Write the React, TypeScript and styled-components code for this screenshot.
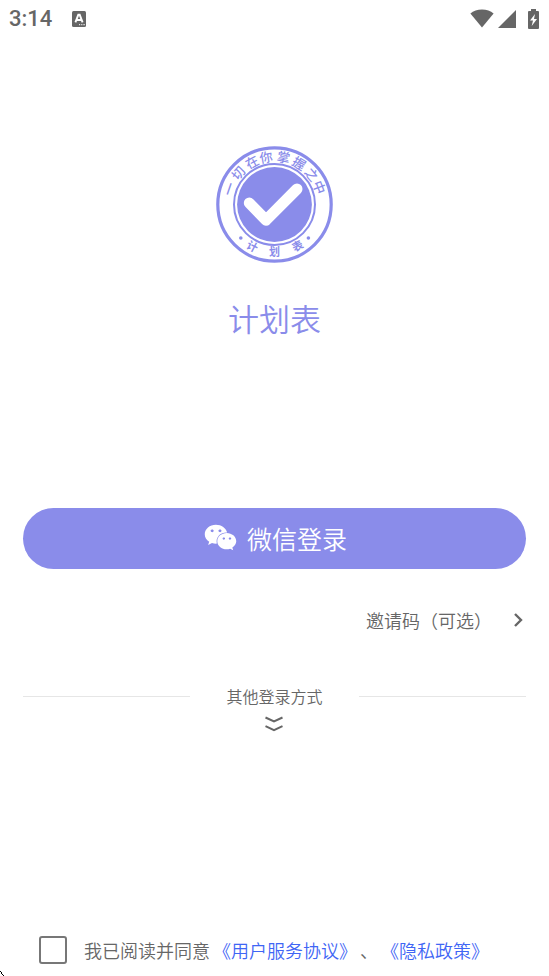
import React from "react";
import styled, { createGlobalStyle } from "styled-components";
import { FaWeixin } from "react-icons/fa";

const brand = "#8a8cea";
const ink = "#666666";
const textFont = `"Noto Sans CJK SC", sans-serif`;

const GlobalStyle = createGlobalStyle`
  *, *::before, *::after { box-sizing: border-box; }
  body {
    margin: 0;
    background: #ffffff;
    color: ${ink};
    font-family: ${textFont};
    font-weight: 350;
  }
  button, input { font: inherit; color: inherit; margin: 0; padding: 0; }
`;

const Page = styled.div`
  position: relative;
  display: flex;
  flex-direction: column;
  min-height: 100vh;
  padding-bottom: 12px;
`;

const StatusBar = styled.header`
  display: flex;
  align-items: center;
  justify-content: space-between;
  height: 37px;
  padding: 0 10px 0 9px;
`;

const StatusGroup = styled.div<{ $gap: number }>`
  display: flex;
  align-items: center;
  gap: ${({ $gap }) => $gap}px;
  svg { display: block; }
`;

const Clock = styled.span`
  font-family: Roboto, sans-serif;
  font-size: 22px;
  font-weight: 500;
  line-height: 28px;
`;

const Brand = styled.section`
  display: flex;
  flex-direction: column;
  align-items: center;
  gap: 35px;
  padding-top: 109px;
`;

const Title = styled.h1`
  margin: 0;
  color: ${brand};
  font-size: 31px;
  font-weight: 350;
  line-height: 40px;
`;

const Actions = styled.main`
  display: flex;
  flex-direction: column;
  padding: 170px 23px 0;
`;

const LoginButton = styled.button`
  display: flex;
  align-items: center;
  justify-content: center;
  gap: 10px;
  height: 61px;
  border: 0;
  border-radius: 31px;
  background: ${brand};
  color: #ffffff;
  font-size: 25px;
  line-height: 36px;
  cursor: pointer;
  && { padding: 0 0 2px 2px; }
  svg { font-size: 33px; }
`;

const InviteButton = styled.button`
  display: flex;
  align-items: center;
  align-self: flex-end;
  gap: 18px;
  height: 40px;
  margin-top: 31px;
  border: 0;
  background: none;
  font-size: 18px;
  line-height: 28px;
  cursor: pointer;
`;

const OtherMethods = styled.button`
  display: grid;
  grid-template-columns: 1fr auto 1fr;
  align-items: center;
  column-gap: 36px;
  row-gap: 8px;
  margin-top: 44px;
  border: 0;
  background: none;
  font-size: 16px;
  line-height: 24px;
  cursor: pointer;
  svg { grid-column: 2; justify-self: center; }
`;

const Rule = styled.span`
  height: 1px;
  background: #e6e6e6;
`;

const Agreement = styled.footer`
  display: flex;
  align-items: center;
  gap: 3px;
  margin-top: auto;
  padding: 0 39px;
  font-size: 18px;
  line-height: 28px;
  white-space: nowrap;
`;

const AgreeLabel = styled.label`
  display: flex;
  align-items: center;
  gap: 17px;
`;

const Checkbox = styled.input`
  appearance: none;
  width: 28px;
  height: 28px;
  border: 2px solid #777777;
  border-radius: 3px;
  background: #ffffff;
  &:checked { background: ${brand}; }
`;

const DocLink = styled.a`
  color: #3f66f5;
  text-decoration: none;
`;

const Pointer = styled.svg`
  position: absolute;
  left: 0;
  bottom: 0;
`;

const motto = [
  { char: "一", angle: -71 },
  { char: "切", angle: -49 },
  { char: "在", angle: -28 },
  { char: "你", angle: -10 },
  { char: "掌", angle: 11 },
  { char: "握", angle: 31 },
  { char: "之", angle: 51 },
  { char: "中", angle: 69 },
];

const sealName = [
  { char: "计", angle: 28 },
  { char: "划", angle: 0 },
  { char: "表", angle: -29 },
];

function Seal() {
  return (
    <svg width="117" height="117" viewBox="0 0 117 117" role="img" aria-label="计划表">
      <g fill="none" stroke={brand}>
        <circle cx="58.5" cy="58.5" r="56.7" strokeWidth="3.2" />
        <circle cx="58.5" cy="58.5" r="40.5" strokeWidth="2" />
      </g>
      <circle cx="58.5" cy="58.5" r="37.4" fill={brand} />
      <path
        d="M33.3 57 50 74.200 81 43"
        fill="none"
        stroke="#ffffff"
        strokeWidth="11"
        strokeLinecap="round"
        strokeLinejoin="round"
      />
      <g fill={brand} textAnchor="middle" fontFamily="Noto Sans CJK SC, sans-serif">
        {motto.map(({ char, angle }) => (
          <text
            key={char}
            x="58.5"
            y="15.5"
            fontSize="13"
            fontWeight="500"
            transform={`rotate(${angle} 58.5 58.5)`}
          >
            {char}
          </text>
        ))}
        {sealName.map(({ char, angle }) => (
          <text
            key={char}
            x="58.5"
            y="110"
            fontSize="11"
            fontWeight="700"
            transform={`rotate(${angle} 58.5 58.5)`}
          >
            {char}
          </text>
        ))}
      </g>
      <circle cx="24.8" cy="92" r="1.8" fill={brand} />
      <circle cx="92.4" cy="92" r="1.8" fill={brand} />
    </svg>
  );
}

export default function App() {
  return (
    <>
      <GlobalStyle />
      <Page>
        <StatusBar>
          <StatusGroup $gap={20}>
            <Clock>3:14</Clock>
            <svg width="14" height="16" viewBox="0 0 14 16" aria-hidden="true">
              <rect width="14" height="16" rx="1.5" fill={ink} />
              <path d="M3.4 11.400 6.300 3.800h1.400l2.900 7.600M4.800 9h4.400" fill="none" stroke="#fff" strokeWidth="1.900" />
              <path d="M7 13.700h1.200m1 0h1.200m1 0h1.400" stroke="#fff" strokeWidth="1" />
            </svg>
          </StatusGroup>
          <StatusGroup $gap={4}>
            <svg width="24" height="19" viewBox="0 0 24 19" aria-hidden="true">
              <path d="M12 18.600.400 4.400C3.400 2 7.400.400 12 .400s8.600 1.600 11.600 4z" fill={ink} />
            </svg>
            <svg width="18" height="18" viewBox="0 0 18 18" aria-hidden="true">
              <path d="M18 0v18H0z" fill={ink} />
            </svg>
            <svg width="19" height="20" viewBox="0 0 19 20" aria-hidden="true">
              <path
                fillRule="evenodd"
                fill={ink}
                d="M11 0h5v2h2q1 0 1 1v16q0 1-1 1H9q-1 0-1-1V3q0-1 1-1h2zM15 5l-5 6.500h3L11.700 17 17 10h-3z"
              />
            </svg>
          </StatusGroup>
        </StatusBar>

        <Brand>
          <Seal />
          <Title>计划表</Title>
        </Brand>

        <Actions>
          <LoginButton type="button">
            <FaWeixin aria-hidden="true" />
            微信登录
          </LoginButton>
          <InviteButton type="button">
            邀请码（可选）
            <svg width="16" height="16" viewBox="0 0 16 16" aria-hidden="true">
              <path d="m5 2 6 6-6 6" fill="none" stroke={ink} strokeWidth="2.4" />
            </svg>
          </InviteButton>
          <OtherMethods type="button">
            <Rule />
            其他登录方式
            <Rule />
            <svg width="18" height="16" viewBox="0 0 18 16" aria-hidden="true">
              <path d="m.5 1.500 8.500 4 8.500-4M.5 10.200l8.500 4 8.500-4" fill="none" stroke={ink} strokeWidth="2" />
            </svg>
          </OtherMethods>
        </Actions>

        <Agreement>
          <AgreeLabel>
            <Checkbox type="checkbox" />
            我已阅读并同意
          </AgreeLabel>
          <DocLink href="#terms">《用户服务协议》</DocLink>
          <span>、</span>
          <DocLink href="#privacy">《隐私政策》</DocLink>
        </Agreement>

        <Pointer width="5" height="5" viewBox="0 0 5 5" aria-hidden="true">
          <path d="M0 0.500h1m0 1h1m-1 1h1m0 1h1m0 1h1" stroke="#000000" strokeWidth="1" />
        </Pointer>
      </Page>
    </>
  );
}
